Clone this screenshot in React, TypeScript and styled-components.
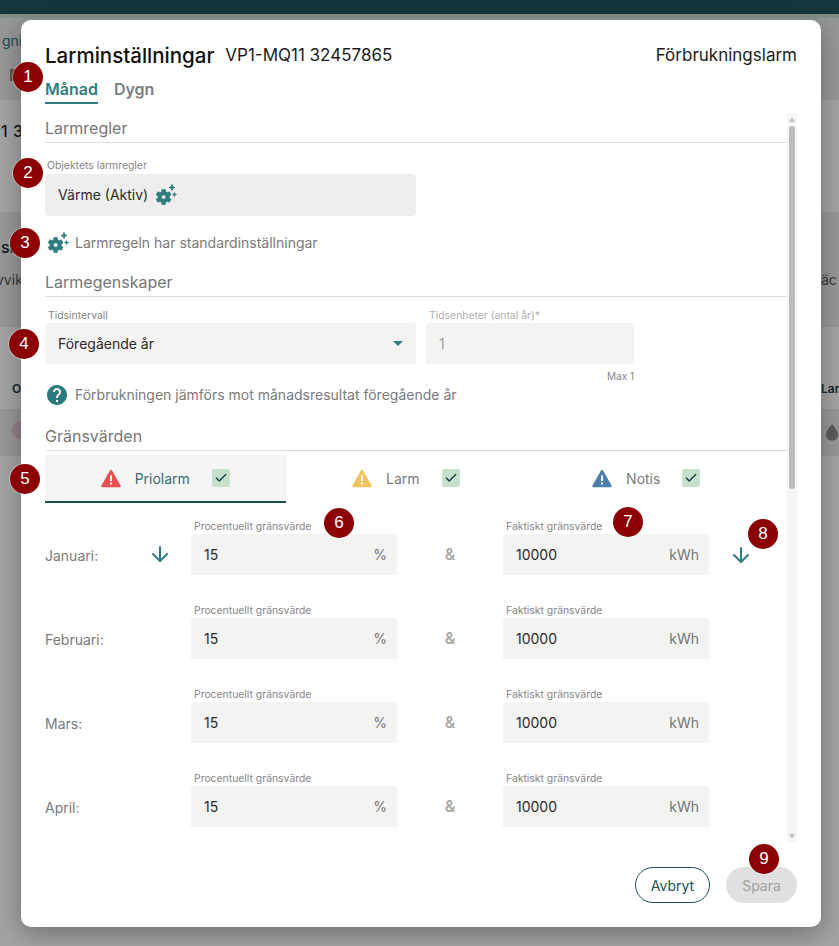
import React from "react";
import styled, { createGlobalStyle } from "styled-components";
import { ArrowDown, Check } from "lucide-react";

const months = ["Januari", "Februari", "Mars", "April"];

const alarmTabs = [
  { name: "Priolarm", color: "#e85050", active: true },
  { name: "Larm", color: "#f2c260", active: false },
  { name: "Notis", color: "#4a80ab", active: false },
];

// callouts on top of the screenshot
const markers = [
  { n: 1, x: 28, y: 77 },
  { n: 2, x: 28, y: 173 },
  { n: 3, x: 25, y: 243 },
  { n: 4, x: 24, y: 344 },
  { n: 5, x: 25, y: 479 },
  { n: 6, x: 339, y: 523 },
  { n: 7, x: 628, y: 522 },
  { n: 8, x: 763, y: 534 },
  { n: 9, x: 764, y: 859 },
];

function GearIcon() {
  return (
    <GearSvg viewBox="0 0 22 22">
      <path
        transform="translate(-1 3.4) scale(.8)"
        stroke="currentColor"
        strokeWidth=".5"
        d="M19.14 12.94c.04-.3.06-.61.06-.94 0-.32-.02-.64-.07-.94l2.03-1.58c.18-.14.23-.41.12-.61l-1.92-3.32c-.12-.22-.37-.29-.59-.22l-2.39.96c-.5-.38-1.03-.7-1.62-.94l-.36-2.54c-.04-.24-.24-.41-.48-.41h-3.84c-.24 0-.43.17-.47.41l-.36 2.54c-.59.24-1.13.57-1.62.94l-2.39-.96c-.22-.08-.47 0-.59.22L2.74 8.87c-.12.21-.08.47.12.61l2.03 1.58c-.05.3-.09.63-.09.94s.02.64.07.94l-2.03 1.58c-.18.14-.23.41-.12.61l1.92 3.32c.12.22.37.29.59.22l2.39-.96c.5.38 1.03.7 1.62.94l.36 2.54c.05.24.24.41.48.41h3.84c.24 0 .44-.17.47-.41l.36-2.54c.59-.24 1.13-.56 1.62-.94l2.39.96c.22.08.47 0 .59-.22l1.92-3.32c.12-.22.07-.47-.12-.61l-2.01-1.58zM12 14.6c-1.43 0-2.6-1.17-2.6-2.6s1.17-2.6 2.6-2.6 2.6 1.17 2.6 2.6-1.17 2.6-2.6 2.6z"
      />
      <path d="M17 0.5Q17 3.5 20 3.5Q17 3.5 17 6.5Q17 3.5 14 3.5Q17 3.5 17 0.5Z" stroke="currentColor" strokeWidth="1" />
      <path d="M19.5 8.5Q19.5 10.5 21.5 10.5Q19.5 10.5 19.5 12.5Q19.5 10.5 17.5 10.5Q19.5 10.5 19.5 8.5Z" stroke="currentColor" strokeWidth=".8" />
    </GearSvg>
  );
}

function WarningIcon({ color }: { color: string }) {
  return (
    <svg width="20" height="19" viewBox="0 0 20 19">
      <path d="M10 2L18.5 17H1.5Z" fill={color} stroke={color} strokeWidth="2.4" strokeLinejoin="round" />
      <rect x="9" y="6.5" width="2" height="5.5" fill="#fff" />
      <rect x="9" y="13.5" width="2" height="2" fill="#fff" />
    </svg>
  );
}

function HelpIcon() {
  return (
    <HelpSvg viewBox="0 0 24 24">
      <path d="M12 2C6.48 2 2 6.48 2 12s4.48 10 10 10 10-4.48 10-10S17.52 2 12 2zm1 17h-2v-2h2v2zm2.07-7.75l-.9.92C13.45 12.9 13 13.5 13 15h-2v-.5c0-1.1.45-2.1 1.17-2.83l1.24-1.26c.37-.36.59-.86.59-1.41 0-1.1-.9-2-2-2s-2 .9-2 2H8c0-2.21 1.79-4 4-4s4 1.79 4 4c0 .88-.36 1.68-.93 2.25z" />
    </HelpSvg>
  );
}

function App() {
  return (
    <Page>
      <GlobalStyle />
      <TopBar />
      <TopStrip />
      <Band $h={82} $tinted $pt={15}>
        <BackRow>
          <BackLink>gni</BackLink>
        </BackRow>
        <BackRow $mt={18}>
          <BackBox />
        </BackRow>
      </Band>
      <Band $h={112} $pt={23}>
        <BackRow>
          <BackStrong>1 3</BackStrong>
        </BackRow>
      </Band>
      <Band $h={115} $tinted $pt={27}>
        <BackRow>
          <BackStrong>sk</BackStrong>
        </BackRow>
        <BackRow $mt={17}>
          <BackTextLeft>vvik</BackTextLeft>
          <BackText>äc</BackText>
        </BackRow>
      </Band>
      <Band $h={82} $pt={54}>
        <BackRow>
          <BackHead $left={12}>O</BackHead>
          <BackHead>Lar</BackHead>
        </BackRow>
      </Band>
      <Band $h={47} $tinted $pt={13}>
        <BackRow>
          <BackCircle />
          <BackDrop>
            <svg width="16" height="20" viewBox="0 0 16 20">
              <path d="M8 1C8 1 1 8 1 13a7 7 0 0 0 14 0C15 8 8 1 8 1Z" fill="#8f8f8f" />
            </svg>
          </BackDrop>
        </BackRow>
      </Band>
      <Band $h={490} $pt={0} />
      <Overlay />

      <Modal>
        <Header>
          <HeaderLeft>
            <Title>Larminställningar</Title>
            <SubTitle>VP1-MQ11 32457865</SubTitle>
          </HeaderLeft>
          <SubTitle>Förbrukningslarm</SubTitle>
        </Header>
        <PeriodTabs>
          <PeriodTab $active>Månad</PeriodTab>
          <PeriodTab>Dygn</PeriodTab>
        </PeriodTabs>

        <ScrollArea>
          <Scroller>
            <SectionHeading>Larmregler</SectionHeading>
            <FieldLabel $mt={16} $mb={1} $indent={2}>
              Objektets larmregler
            </FieldLabel>
            <RuleField>
              Värme (Aktiv)
              <GearIcon />
            </RuleField>
            <InfoRow $mt={17}>
              <GearIcon />
              Larmregeln har standardinställningar
            </InfoRow>

            <SectionHeading $mt={15}>Larmegenskaper</SectionHeading>
            <PropertyGrid>
              <div>
                <FieldLabel $indent={3}>Tidsintervall</FieldLabel>
                <SelectField>
                  Föregående år
                  <Caret />
                </SelectField>
              </div>
              <div>
                <FieldLabel $indent={3} $muted>
                  Tidsenheter (antal år)*
                </FieldLabel>
                <DisabledField>1</DisabledField>
                <MaxHint>Max 1</MaxHint>
              </div>
            </PropertyGrid>
            <InfoRow $mt={3}>
              <HelpIcon />
              Förbrukningen jämförs mot månadsresultat föregående år
            </InfoRow>

            <SectionHeading $mt={17}>Gränsvärden</SectionHeading>
            <AlarmTabs>
              {alarmTabs.map((tab) => (
                <AlarmTab key={tab.name} $active={tab.active}>
                  <WarningIcon color={tab.color} />
                  <AlarmName $active={tab.active}>{tab.name}</AlarmName>
                  <CheckBox>
                    <Check size={14} strokeWidth={2.6} />
                  </CheckBox>
                </AlarmTab>
              ))}
            </AlarmTabs>

            <MonthList>
              {months.map((month, i) => (
                <MonthRow key={month}>
                  <MonthCell>
                    <MonthName>{month}:</MonthName>
                    {i === 0 && <ArrowDown size={24} strokeWidth={2} />}
                  </MonthCell>
                  <div>
                    <FieldLabel $indent={3}>Procentuellt gränsvärde</FieldLabel>
                    <ValueField>
                      15
                      <Unit>%</Unit>
                    </ValueField>
                  </div>
                  <Amp>&amp;</Amp>
                  <div>
                    <FieldLabel $indent={3}>Faktiskt gränsvärde</FieldLabel>
                    <ValueField>
                      10000
                      <Unit>kWh</Unit>
                    </ValueField>
                  </div>
                  <CopyCell>{i === 0 && <ArrowDown size={24} strokeWidth={2} />}</CopyCell>
                </MonthRow>
              ))}
            </MonthList>
          </Scroller>
          <ScrollTrack>
            <ScrollUp />
            <ScrollThumb />
            <ScrollDown />
          </ScrollTrack>
        </ScrollArea>

        <Footer>
          <CancelButton>Avbryt</CancelButton>
          <SaveButton disabled>Spara</SaveButton>
        </Footer>
      </Modal>

      {markers.map((m) => (
        <Marker key={m.n} style={{ left: m.x - 15, top: m.y - 15 }}>
          {m.n}
        </Marker>
      ))}
    </Page>
  );
}

export default App;

const GlobalStyle = createGlobalStyle`
  html, body {
    margin: 0;
    padding: 0;
    height: 100%;
    overflow: hidden;
  }
  body {
    font-family: Inter, "Liberation Sans", sans-serif;
  }
  * {
    box-sizing: border-box;
  }
`;

const Page = styled.div`
  position: relative;
  width: 839px;
  height: 946px;
  overflow: hidden;
  background: #fff;
`;

const TopBar = styled.div`
  height: 14px;
  background: #21575f;
`;

const TopStrip = styled.div`
  height: 4px;
  background: #c8e0d0;
`;

const Band = styled.div<{ $h: number; $tinted?: boolean; $pt: number }>`
  height: ${(p) => p.$h}px;
  padding-top: ${(p) => p.$pt}px;
  background: ${(p) => (p.$tinted ? "#ececec" : "#fff")};
`;

const BackRow = styled.div<{ $mt?: number }>`
  display: flex;
  justify-content: space-between;
  align-items: center;
  height: 16px;
  margin-top: ${(p) => p.$mt || 0}px;
  white-space: nowrap;
  font-size: 14px;
  line-height: 16px;
`;

const BackLink = styled.span`
  margin-left: 2px;
  color: #2c7a86;
`;

const BackBox = styled.span`
  width: 12px;
  height: 12px;
  margin-left: 10px;
  background: #a08070;
`;

const BackStrong = styled.span`
  width: 21px;
  padding-left: 1px;
  font-size: 16px;
  font-weight: 500;
  word-spacing: 1px;
  color: #1d2730;
`;

const BackText = styled.span`
  width: 18px;
  color: #555;
`;

const BackTextLeft = styled.span`
  width: 21px;
  margin-left: -4px;
  color: #555;
`;

const BackHead = styled.span<{ $left?: number }>`
  margin-left: ${(p) => p.$left || 0}px;
  width: 18px;
  font-size: 12px;
  font-weight: 600;
  color: #1d3a50;
`;

const BackCircle = styled.span`
  width: 20px;
  height: 20px;
  margin-left: 12px;
  border-radius: 50%;
  background: #e0c8d8;
`;

const BackDrop = styled.span`
  display: flex;
  width: 14px;
  overflow: hidden;
  margin-top: 3px;
`;

const Overlay = styled.div`
  position: absolute;
  inset: 0;
  background: rgba(0, 0, 0, 0.36);
`;

const Modal = styled.div`
  position: absolute;
  left: 21px;
  top: 20px;
  width: 800px;
  height: 907px;
  padding: 24px;
  display: flex;
  flex-direction: column;
  background: #fff;
  border-radius: 10px;
  box-shadow: 0 6px 24px rgba(0, 0, 0, 0.32);
`;

const Header = styled.div`
  display: flex;
  justify-content: space-between;
  align-items: center;
  height: 22px;
`;

const HeaderLeft = styled.div`
  display: flex;
  align-items: center;
  gap: 11px;
`;

const Title = styled.span`
  font-size: 20.5px;
  font-weight: 500;
  color: #111;
`;

const SubTitle = styled.span`
  font-size: 17px;
  color: #1c1c1c;
`;

const PeriodTabs = styled.div`
  display: flex;
  gap: 16px;
  height: 25px;
  margin-top: 13px;
  flex-shrink: 0;
`;

const PeriodTab = styled.div<{ $active?: boolean }>`
  height: 25px;
  padding-top: 1px;
  font-size: 16px;
  line-height: 19px;
  font-weight: 600;
  color: ${(p) => (p.$active ? "#2f7d80" : "#7d7d7d")};
  border-bottom: 2px solid ${(p) => (p.$active ? "#2f7d80" : "transparent")};
`;

const ScrollArea = styled.div`
  display: flex;
  height: 728px;
  flex-shrink: 0;
  margin-top: 10px;
`;

const Scroller = styled.div`
  flex: 1;
  min-width: 0;
  overflow: hidden;
`;

const ScrollTrack = styled.div`
  display: flex;
  flex-direction: column;
  align-items: center;
  width: 10px;
  background: #f6f6f6;
`;

const ScrollUp = styled.span`
  width: 0;
  height: 0;
  margin: 3px 0 4px;
  border-left: 3.5px solid transparent;
  border-right: 3.5px solid transparent;
  border-bottom: 5px solid #c4c4c4;
`;

const ScrollThumb = styled.span`
  width: 6px;
  height: 363px;
  border-radius: 3px;
  background: #bcbcbc;
`;

const ScrollDown = styled.span`
  width: 0;
  height: 0;
  margin-top: auto;
  margin-bottom: 3px;
  border-left: 3.5px solid transparent;
  border-right: 3.5px solid transparent;
  border-top: 5px solid #c4c4c4;
`;

const SectionHeading = styled.div<{ $mt?: number }>`
  margin-top: ${(p) => p.$mt || 0}px;
  padding: 4px 0;
  font-size: 16px;
  line-height: 20px;
  color: #767676;
  border-bottom: 1px solid #dedede;
`;

const FieldLabel = styled.div<{ $mt?: number; $mb?: number; $indent?: number; $muted?: boolean }>`
  margin-top: ${(p) => p.$mt || 0}px;
  margin-bottom: ${(p) => p.$mb || 0}px;
  padding-left: ${(p) => p.$indent || 0}px;
  font-size: 10.4px;
  line-height: 14px;
  white-space: nowrap;
  color: ${(p) => (p.$muted ? "#b0b0b0" : "#858585")};
`;

const RuleField = styled.div`
  display: flex;
  align-items: center;
  gap: 7px;
  width: 371px;
  height: 42px;
  padding: 0 0 1px 13px;
  background: #eeeeee;
  border-radius: 4px;
  font-size: 14px;
  color: #2a2a2a;
`;

const GearSvg = styled.svg`
  width: 22px;
  height: 22px;
  flex-shrink: 0;
  fill: #2f7d80;
  color: #2f7d80;
`;

const HelpSvg = styled.svg`
  width: 24px;
  height: 24px;
  margin: 0 -2px;
  flex-shrink: 0;
  fill: #2b7a7e;
`;

const InfoRow = styled.div<{ $mt: number }>`
  display: flex;
  align-items: center;
  gap: 6px;
  height: 20px;
  margin-top: ${(p) => p.$mt}px;
  padding: 0 0 2px 2px;
  font-size: 14px;
  color: #7a7a7a;
  svg {
    margin-top: 2px;
  }
  ${HelpSvg} {
    margin-right: 0;
  }
`;

const PropertyGrid = styled.div`
  display: grid;
  grid-template-columns: 371px 208px;
  column-gap: 10px;
  margin-top: 12px;
`;

const SelectField = styled.div`
  display: flex;
  align-items: center;
  justify-content: space-between;
  height: 41px;
  padding: 0 13px;
  background: #f3f3f2;
  border-radius: 4px 4px 0 0;
  font-size: 14px;
  color: #2a2a2a;
`;

const Caret = styled.span`
  width: 0;
  height: 0;
  border-left: 5px solid transparent;
  border-right: 5px solid transparent;
  border-top: 5px solid #2f7d80;
`;

const DisabledField = styled(SelectField)`
  color: #a0a0a0;
`;

const MaxHint = styled.div`
  margin-top: 6px;
  text-align: right;
  font-size: 10px;
  line-height: 12px;
  color: #858585;
`;

const AlarmTabs = styled.div`
  display: grid;
  grid-template-columns: repeat(3, 240.5px);
  margin-top: 4px;
`;

const AlarmTab = styled.div<{ $active: boolean }>`
  display: flex;
  align-items: center;
  justify-content: center;
  height: 48px;
  background: ${(p) => (p.$active ? "#f5f5f5" : "transparent")};
  border-bottom: 2px solid ${(p) => (p.$active ? "#1d4f54" : "transparent")};
`;

const AlarmName = styled.span<{ $active: boolean }>`
  margin: 0 22px 0 14px;
  font-size: 14px;
  color: ${(p) => (p.$active ? "#3f6a6e" : "#7a7a7a")};
`;

const CheckBox = styled.span`
  display: flex;
  align-items: center;
  justify-content: center;
  width: 18px;
  height: 18px;
  border-radius: 2px;
  background: #c5e1cc;
  color: #1f4448;
`;

const MonthList = styled.div`
  display: flex;
  flex-direction: column;
  gap: 29px;
  margin-top: 17px;
`;

const MonthRow = styled.div`
  display: grid;
  grid-template-columns: 146px 206px 106px 206px 64px;
  align-items: end;
`;

const MonthCell = styled.div`
  display: flex;
  align-items: center;
  height: 40px;
  color: #2f7d80;
  svg {
    margin-top: -2px;
  }
`;

const MonthName = styled.span`
  width: 103px;
  font-size: 14px;
  color: #7a7a7a;
`;

const ValueField = styled.div`
  display: flex;
  align-items: center;
  justify-content: space-between;
  height: 41px;
  padding: 0 10px 0 13px;
  background: #f3f3f2;
  border-radius: 4px 4px 0 0;
  font-size: 14px;
  color: #2a2a2a;
`;

const Unit = styled.span`
  color: #767676;
`;

const Amp = styled.div`
  height: 41px;
  line-height: 41px;
  text-align: center;
  font-size: 16px;
  font-weight: 600;
  color: #a8a8a8;
`;

const CopyCell = styled.div`
  display: flex;
  align-items: center;
  justify-content: center;
  height: 41px;
  color: #2f7d80;
`;

const Footer = styled.div`
  display: flex;
  justify-content: flex-end;
  gap: 16px;
  margin-top: 25px;
`;

const CancelButton = styled.button`
  width: 75px;
  height: 36px;
  border: 1px solid #1d4f54;
  border-radius: 18px;
  background: #fff;
  font-family: inherit;
  font-size: 14px;
  color: #1d4f54;
`;

const SaveButton = styled.button`
  width: 71px;
  height: 36px;
  border: 0;
  border-radius: 18px;
  background: #e0e0e0;
  font-family: inherit;
  font-size: 14px;
  color: #a0a0a0;
`;

const Marker = styled.div`
  position: absolute;
  display: flex;
  align-items: center;
  justify-content: center;
  width: 30px;
  height: 30px;
  border-radius: 50%;
  background: #8b0000;
  box-shadow: 0 0 0 1px rgba(255, 255, 255, 0.35);
  font-family: "Liberation Sans", sans-serif;
  font-size: 17px;
  color: #fff;
`;
